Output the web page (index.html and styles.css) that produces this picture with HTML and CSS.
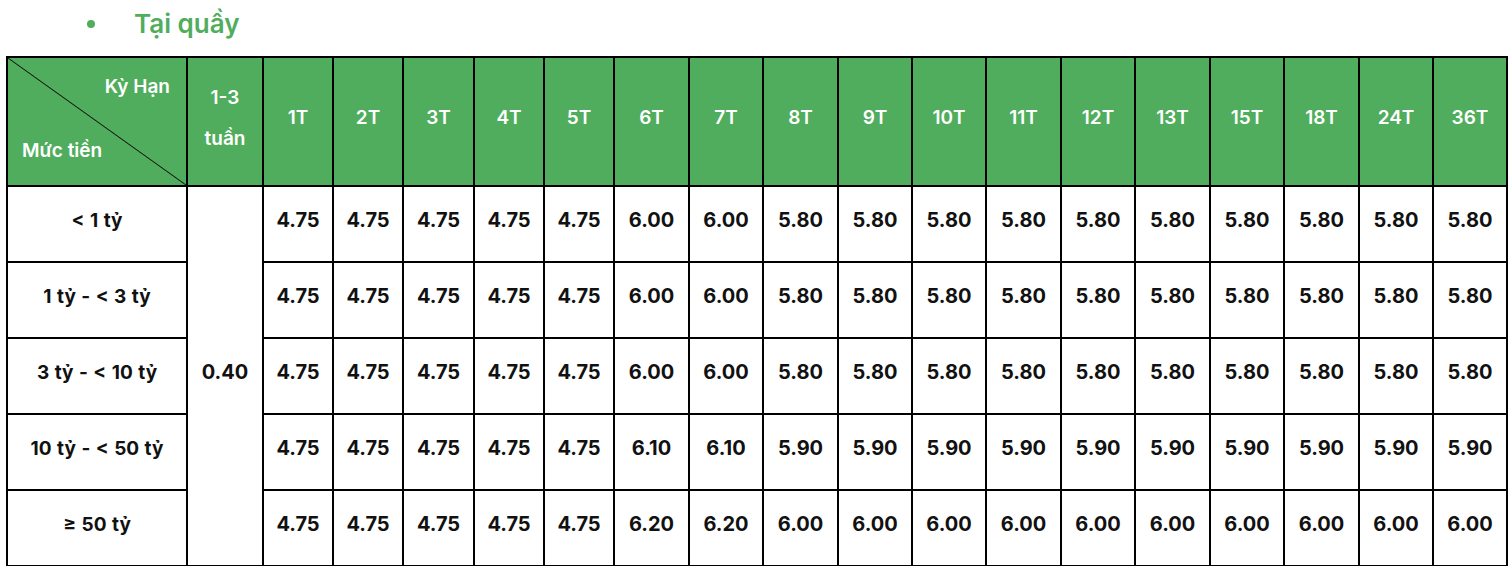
FILE: index.html
```html
<!DOCTYPE html>
<html lang="vi">
<head>
<meta charset="utf-8">
<title>Tại quầy</title>
<link rel="stylesheet" href="styles.css">
</head>
<body>
<ul class="section-list">
  <li class="section-item"><span class="dot"></span><span class="section-title">Tại quầy</span></li>
</ul>
<table class="rates">
  <colgroup>
    <col class="c-label">
    <col class="c-week">
    <col class="c-s"><col class="c-s"><col class="c-s71"><col class="c-s"><col class="c-s">
    <col class="c-w75"><col class="c-w74"><col class="c-w75"><col class="c-w74"><col class="c-w74"><col class="c-w75"><col class="c-w74"><col class="c-w75"><col class="c-w74"><col class="c-w75"><col class="c-w74"><col class="c-w74">
  </colgroup>
  <thead>
    <tr class="head-row">
      <th class="corner">
        <div class="corner-top">Kỳ Hạn</div>
        <div class="corner-bottom">Mức tiền</div>
      </th>
      <th><span class="two-line">1-3<br>tuần</span></th>
      <th>1T</th><th>2T</th><th>3T</th><th>4T</th><th>5T</th><th>6T</th><th>7T</th><th>8T</th><th>9T</th><th>10T</th><th>11T</th><th>12T</th><th>13T</th><th>15T</th><th>18T</th><th>24T</th><th>36T</th>
    </tr>
  </thead>
  <tbody>
    <tr>
      <td class="label">&lt; 1 tỷ</td>
      <td class="week" rowspan="5">0.40</td>
      <td>4.75</td><td>4.75</td><td>4.75</td><td>4.75</td><td>4.75</td><td>6.00</td><td>6.00</td><td>5.80</td><td>5.80</td><td>5.80</td><td>5.80</td><td>5.80</td><td>5.80</td><td>5.80</td><td>5.80</td><td>5.80</td><td>5.80</td>
    </tr>
    <tr>
      <td class="label">1 tỷ - &lt; 3 tỷ</td>
      <td>4.75</td><td>4.75</td><td>4.75</td><td>4.75</td><td>4.75</td><td>6.00</td><td>6.00</td><td>5.80</td><td>5.80</td><td>5.80</td><td>5.80</td><td>5.80</td><td>5.80</td><td>5.80</td><td>5.80</td><td>5.80</td><td>5.80</td>
    </tr>
    <tr>
      <td class="label">3 tỷ - &lt; 10 tỷ</td>
      <td>4.75</td><td>4.75</td><td>4.75</td><td>4.75</td><td>4.75</td><td>6.00</td><td>6.00</td><td>5.80</td><td>5.80</td><td>5.80</td><td>5.80</td><td>5.80</td><td>5.80</td><td>5.80</td><td>5.80</td><td>5.80</td><td>5.80</td>
    </tr>
    <tr>
      <td class="label">10 tỷ - &lt; 50 tỷ</td>
      <td>4.75</td><td>4.75</td><td>4.75</td><td>4.75</td><td>4.75</td><td>6.10</td><td>6.10</td><td>5.90</td><td>5.90</td><td>5.90</td><td>5.90</td><td>5.90</td><td>5.90</td><td>5.90</td><td>5.90</td><td>5.90</td><td>5.90</td>
    </tr>
    <tr>
      <td class="label">≥ 50 tỷ</td>
      <td>4.75</td><td>4.75</td><td>4.75</td><td>4.75</td><td>4.75</td><td>6.20</td><td>6.20</td><td>6.00</td><td>6.00</td><td>6.00</td><td>6.00</td><td>6.00</td><td>6.00</td><td>6.00</td><td>6.00</td><td>6.00</td><td>6.00</td>
    </tr>
  </tbody>
</table>
</body>
</html>
```
FILE: styles.css
```css
html, body {
  margin: 0;
  padding: 0;
  background: #ffffff;
}
body {
  font-family: "Inter", "Noto Sans", sans-serif;
  color: #111111;
}
.section-list {
  list-style: none;
  margin: 0;
  padding: 8px 0 0 87px;
}
.section-item {
  display: flex;
  align-items: center;
  height: 32px;
}
.dot {
  width: 8px;
  height: 8px;
  border-radius: 50%;
  background: #50ad5d;
  margin-right: 39px;
}
.section-title {
  font-size: 26px;
  font-weight: 600;
  color: #50ad5d;
  line-height: 32px;
}
.rates {
  margin: 16px 0 0 6px;
  border-collapse: separate;
  border-spacing: 0;
  table-layout: fixed;
  width: 1502px;
  border-top: 2px solid #000;
  border-left: 2px solid #000;
}
.c-label { width: 180px; }
.c-week { width: 76px; }
.c-s { width: 70px; }
.c-s71 { width: 71px; }
.c-w75 { width: 75px; }
.c-w74 { width: 74px; }
.rates th, .rates td {
  border-right: 2px solid #000;
  border-bottom: 2px solid #000;
  padding: 0 0 8px 0;
  text-align: center;
  vertical-align: middle;
}
.rates th {
  background: #50ad5d;
  color: #ffffff;
  font-size: 19px;
  font-weight: 600;
}
.head-row { height: 129px; }
.rates tbody tr { height: 76px; }
.rates td {
  font-size: 20px;
  font-weight: 700;
  color: #111111;
}
.rates td.label {
  font-size: 19px;
  word-spacing: 1px;
}
.two-line {
  display: inline-block;
  line-height: 41px;
}
.rates th.corner {
  vertical-align: top;
  padding: 18px 16px 0 14px;
  background: linear-gradient(to top right, transparent calc(50% - 0.9px), #111 50%, transparent calc(50% + 0.9px)), #50ad5d;
}
.corner-top {
  text-align: right;
  line-height: 22px;
}
.corner-bottom {
  text-align: left;
  line-height: 22px;
  margin-top: 42px;
}
```
